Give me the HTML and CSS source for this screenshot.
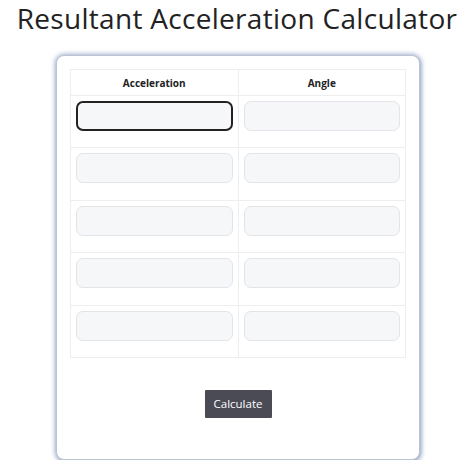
FILE: index.html
```html
<!DOCTYPE html>
<html lang="en">
<head>
<meta charset="utf-8">
<title>Resultant Acceleration Calculator</title>
<link rel="stylesheet" href="styles.css">
</head>
<body>
<h1 class="title">Resultant Acceleration Calculator</h1>
<div class="card">
  <table class="grid">
    <thead>
      <tr><th>Acceleration</th><th>Angle</th></tr>
    </thead>
    <tbody>
      <tr><td><input class="field focused" type="text"></td><td><input class="field" type="text"></td></tr>
      <tr><td><input class="field" type="text"></td><td><input class="field" type="text"></td></tr>
      <tr><td><input class="field" type="text"></td><td><input class="field" type="text"></td></tr>
      <tr><td><input class="field" type="text"></td><td><input class="field" type="text"></td></tr>
      <tr><td><input class="field" type="text"></td><td><input class="field" type="text"></td></tr>
    </tbody>
  </table>
  <div class="actions"><button class="btn" type="button">Calculate</button></div>
</div>
</body>
</html>
```
FILE: styles.css
```css
html, body {
  margin: 0;
  padding: 0;
  background: #ffffff;
}
body {
  padding-left: 2px;
  font-family: "Open Sans", "Noto Sans", sans-serif;
  color: #222222;
}
.title {
  margin: 0 0 18px -2px;
  font-size: 28px;
  line-height: 37px;
  font-weight: 400;
  text-align: center;
  color: #222222;
  letter-spacing: 0.3px;
}
.card {
  box-sizing: border-box;
  width: 364px;
  margin: 0 auto;
  padding: 13px 13px 41px 13px;
  border: 1px solid #b9c4d4;
  border-radius: 8px;
  background: #ffffff;
  box-shadow: 0 0 5px 1px rgba(95, 125, 175, 0.55), 1px 2px 4px rgba(80, 100, 140, 0.35);
}
.grid {
  width: 100%;
  border-collapse: collapse;
}
.grid th {
  height: 25px;
  padding: 0;
  border: 1px solid #eeeeee;
  font-size: 10px;
  font-weight: 700;
  color: #222222;
  text-align: center;
}
.grid td {
  width: 50%;
  padding: 5px 5px 16.4px;
  border: 1px solid #eeeeee;
  vertical-align: top;
}
.field {
  display: block;
  box-sizing: border-box;
  width: 100%;
  height: 30px;
  margin: 0;
  border: 1px solid #e2e4e8;
  border-radius: 7px;
  background: #f6f7f9;
  outline: none;
}
.field.focused {
  border: 2px solid #222222;
}
.actions {
  display: flex;
  justify-content: center;
  margin-top: 32px;
}
.btn {
  width: 67px;
  height: 28px;
  padding: 0;
  border: none;
  border-radius: 1px;
  background: #4b4b56;
  color: #ffffff;
  font-family: "Open Sans", "Noto Sans", sans-serif;
  font-size: 11.5px;
}
```
